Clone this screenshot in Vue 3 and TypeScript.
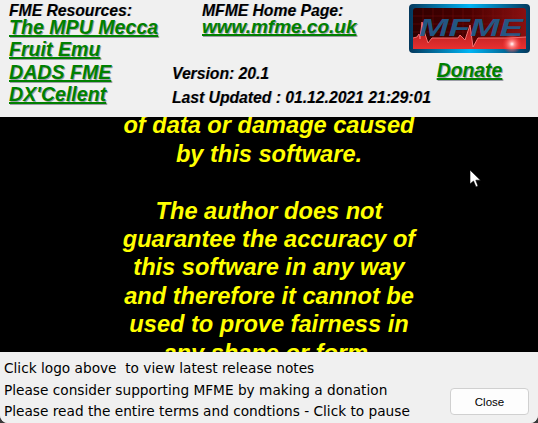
<script setup lang="ts">
const resources: string[] = ['The MPU Mecca', 'Fruit Emu', 'DADS FME', "DX'Cellent"]
const paragraphs: string[][] = [
  ['of data or damage caused', 'by this software.'],
  [
    'The author does not',
    'guarantee the accuracy of',
    'this software in any way',
    'and therefore it cannot be',
    'used to prove fairness in',
    'any shape or form.',
  ],
]
const notes: string[] = [
  'Click logo above  to view latest release notes',
  'Please consider supporting MFME by making a donation',
  'Please read the entire terms and condtions - Click to pause',
]
const ecg =
  'M4 34 L8 33 L10 30 L11 35 L13 18 L16 30 L19 39 L23 34 L49 34 L51 31 L56 36 L61 21 L64 43 L69 34 L100 34 L117 33'
const ecgFill = `${ecg} V45 H4 Z`
</script>

<template>
  <div class="window">
    <header class="top">
      <div class="resources">
        <div class="label">FME Resources:</div>
        <a v-for="r in resources" :key="r" class="link res-link">{{ r }}</a>
      </div>
      <div class="middle">
        <div class="home">
          <div class="label">MFME Home Page:</div>
          <a class="link home-link">www.mfme.co.uk</a>
        </div>
        <div class="version">Version: 20.1</div>
        <div class="updated">Last Updated : 01.12.2021 21:29:01</div>
      </div>
      <div class="side">
        <svg class="logo" width="121" height="49" viewBox="0 0 121 49">
          <defs>
            <linearGradient id="frame" x1="0" x2="1" y1="0" y2="0">
              <stop offset="0" stop-color="#04385c" />
              <stop offset="0.5" stop-color="#00b4f4" />
              <stop offset="1" stop-color="#04385c" />
            </linearGradient>
            <linearGradient id="screen" x1="0" x2="1" y1="0" y2="0">
              <stop offset="0" stop-color="#300000" />
              <stop offset="0.5" stop-color="#4a0000" />
              <stop offset="1" stop-color="#8a1010" />
            </linearGradient>
            <linearGradient id="glow" x1="0" x2="0" y1="0" y2="1">
              <stop offset="0" stop-color="#a01818" />
              <stop offset="1" stop-color="#e83030" />
            </linearGradient>
            <radialGradient id="flare">
              <stop offset="0" stop-color="#ffffff" />
              <stop offset="0.25" stop-color="#ff9090" />
              <stop offset="1" stop-color="#ff3030" stop-opacity="0" />
            </radialGradient>
          </defs>
          <rect width="121" height="49" rx="4" fill="url(#frame)" />
          <rect x="4" y="4" width="113" height="41" rx="3" fill="url(#screen)" />
          <g stroke="#8a1414" stroke-width="0.5" opacity="0.7">
            <path d="M14 4V45M24 4V45M34 4V45M44 4V45M54 4V45M64 4V45M74 4V45M84 4V45M94 4V45M104 4V45" />
            <path d="M4 12H117M4 20H117M4 28H117" />
          </g>
          <path :d="ecgFill" fill="url(#glow)" />
          <path :d="ecg" fill="none" stroke="#f47070" stroke-width="1" />
          <text class="logo-text" x="62" y="32" text-anchor="middle" textLength="104" lengthAdjust="spacingAndGlyphs">MFME</text>
          <circle cx="103" cy="40" r="10" fill="url(#flare)" />
        </svg>
        <a class="link donate">Donate</a>
      </div>
    </header>

    <main class="scroller">
      <div class="scroll-text">
        <p v-for="(p, i) in paragraphs" :key="i">
          <span v-for="line in p" :key="line" class="line">{{ line }}</span>
        </p>
      </div>
      <svg class="pointer" width="13" height="19" viewBox="0 0 13 19">
        <path d="M1 1 V15 L4.5 12 L7 18 L9 17 L6.8 11.2 H11.5 Z" fill="#fff" stroke="#000" stroke-width="0.6" />
      </svg>
    </main>

    <footer class="bottom">
      <div class="notes">
        <div v-for="n in notes" :key="n" class="note">{{ n }}</div>
      </div>
      <button class="close">Close</button>
    </footer>
  </div>
</template>

<style>
html,
body {
  margin: 0;
  background: #3a3a3a;
}
</style>

<style scoped>
.window {
  width: 538px;
  height: 423px;
  display: flex;
  flex-direction: column;
  overflow: hidden;
  border-radius: 0 0 8px 8px;
  background: #f0f0f0;
  font-family: "Liberation Sans", Arial, sans-serif;
  color: #000;
}
.top {
  height: 117px;
  flex: none;
  display: flex;
  box-sizing: border-box;
  padding: 1px 8px 0 9px;
  background: #f0f0f0;
}
.label,
.version,
.updated {
  font-weight: bold;
  font-style: italic;
  font-size: 15.7px;
  line-height: 17px;
  text-shadow: 1px 0 0 rgba(120, 130, 150, 0.45);
}
.label {
  padding-top: 1px;
  margin-bottom: -3px;
}
.link {
  display: block;
  color: #008000;
  font-weight: bold;
  font-style: italic;
  font-size: 19.6px;
  line-height: 22px;
  text-decoration: underline;
  text-decoration-thickness: 2px;
  text-shadow: 1px 1px 0 rgba(90, 90, 110, 0.55);
  white-space: nowrap;
}
.resources {
  width: 163px;
  flex: none;
}
.res-link {
  height: 22.4px;
}
.home-link {
  font-size: 19px;
}
.middle {
  width: 237px;
  flex: none;
  white-space: nowrap;
}
.home {
  margin-left: 30px;
  height: 60px;
}
.version {
  height: 24px;
  line-height: 25px;
}
.updated {
  line-height: 25px;
}
.side {
  flex: 1;
  padding-top: 3px;
  display: flex;
  flex-direction: column;
  align-items: center;
}
.logo {
  display: block;
  flex: none;
}
.donate {
  margin-top: 6px;
  font-size: 19.4px;
}
.logo-text {
  font-family: "Liberation Sans", Arial, sans-serif;
  font-weight: bold;
  font-style: italic;
  font-size: 24px;
  fill: #1f5f90;
  fill-opacity: 0.92;
}
.scroller {
  position: relative;
  flex: 1;
  min-height: 0;
  overflow: hidden;
  background: #000;
}
.scroll-text {
  margin-top: -5.6px;
  color: #ffff00;
  font-weight: bold;
  font-style: italic;
  font-size: 23.6px;
  line-height: 28.4px;
  text-align: center;
}
.scroll-text p {
  margin: 0 0 28.4px;
}
.line {
  display: block;
}
.pointer {
  position: absolute;
  left: 469px;
  top: 52px;
}
.bottom {
  height: 71px;
  flex: none;
  display: flex;
  justify-content: space-between;
  box-sizing: border-box;
  padding: 6px 9px 0 4px;
  background: #f0f0f0;
}
.notes {
  font-family: "DejaVu Sans", sans-serif;
  font-size: 13.7px;
  line-height: 21.5px;
  white-space: pre;
}
.close {
  align-self: flex-start;
  margin-top: 30px;
  width: 79px;
  height: 27px;
  background: #fdfdfd;
  border: 1px solid #d0d0d0;
  border-radius: 4px;
  font-family: "Liberation Sans", Arial, sans-serif;
  font-size: 11.5px;
  color: #000;
  padding: 0;
}
</style>
